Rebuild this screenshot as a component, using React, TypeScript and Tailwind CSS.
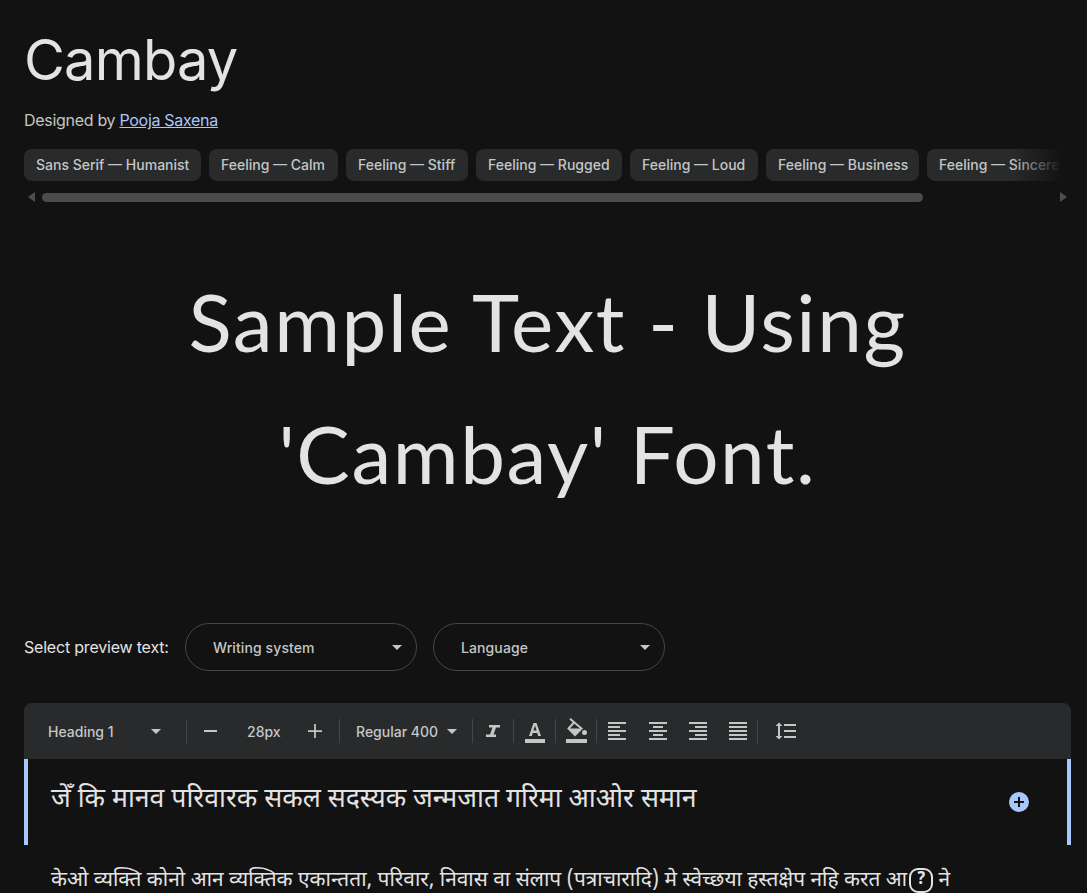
const sans = "font-['Inter','Noto_Sans',sans-serif]";

const chips: [string, number][] = [
  ["Sans Serif — Humanist", 177],
  ["Feeling — Calm", 129],
  ["Feeling — Stiff", 122],
  ["Feeling — Rugged", 146],
  ["Feeling — Loud", 128],
  ["Feeling — Business", 153],
  ["Feeling — Sincere", 144],
];

function Icon({ d, size = 24, className = "" }: { d: string; size?: number; className?: string }) {
  return (
    <svg width={size} height={size} viewBox="0 0 24 24" fill="currentColor" className={className}>
      <path d={d} />
    </svg>
  );
}

function Caret({ className = "" }: { className?: string }) {
  return <span className={`block w-0 h-0 border-x-[5px] border-x-transparent border-t-[5px] border-t-[#c4c7c5] ${className}`} />;
}

function Sep() {
  return <span className="block w-px h-6 bg-[#444746]" />;
}

export default function App() {
  return (
    <div className={`h-[893px] w-[1087px] overflow-hidden bg-[#121212] text-[#e3e3e3] ${sans}`}>
      <div className="pl-6 pr-4">
        <h1 className="pt-[24px] h-[108px] text-[56px] leading-[72px] font-normal tracking-[-0.8px] text-[#e3e3e3]">Cambay</h1>
        <p className="mt-[-1px] h-[26px] text-[16px] leading-[26px] text-[#c4c7c5] tracking-[-0.3px]">
          Designed by <a className="text-[#a8c7fa] underline">Pooja Saxena</a>
        </p>
        <div className="relative mt-[16px] w-[1047px] overflow-hidden">
          <div className="flex gap-2 w-[1200px]">
            {chips.map(([label, w]) => (
              <span
                key={label}
                style={{ width: w }}
                className="h-8 shrink-0 rounded-lg bg-[#282a2c] pl-3 text-[14px] leading-8 font-medium text-[#c4c7c5] whitespace-nowrap"
              >
                {label}
              </span>
            ))}
          </div>
          <div className="absolute right-0 top-0 h-8 w-[60px] bg-gradient-to-r from-transparent to-[#121212] to-85%" />
        </div>
        <div className="mt-[10px] flex h-[12px] items-center">
          <span className="block w-0 h-0 border-y-[5px] border-y-transparent border-r-[7px] border-r-[#4f4f4f] ml-[4px]" />
          <span className="block ml-[7px] h-[9px] w-[881px] rounded-full bg-[#4a4b4b]" />
          <span className="block w-0 h-0 border-y-[5px] border-y-transparent border-l-[7px] border-l-[#4f4f4f] ml-auto mr-[4px]" />
        </div>

        <div className="mt-[52px] h-[264px] w-full text-center text-[80px] leading-[132px] tracking-[1.6px] text-[#e3e3e3] font-['Lato',sans-serif]">
          <div>Sample Text - Using</div>
          <div>'Cambay' Font.</div>
        </div>

        <div className="mt-[104px] flex h-[48px] items-center">
          <span className="text-[16px] tracking-[-0.2px] text-[#e3e3e3] w-[161px] whitespace-nowrap mt-[-1px]">Select preview text:</span>
          <div className="flex h-12 w-[232px] items-center justify-between rounded-3xl border border-[#444746] pl-[27px] pr-[14px]">
            <span className="text-[14px] font-medium text-[#c4c7c5] tracking-[0.1px]">Writing system</span>
            <Caret />
          </div>
          <div className="ml-4 flex h-12 w-[232px] items-center justify-between rounded-3xl border border-[#444746] pl-[27px] pr-[14px]">
            <span className="text-[14px] font-medium text-[#c4c7c5] tracking-[0.1px]">Language</span>
            <Caret />
          </div>
        </div>

        <div className="mt-8 flex h-14 items-center rounded-t-lg bg-[#282a2c] text-[#c4c7c5]">
          <span className="ml-6 w-[103px] text-[14px] font-medium">Heading 1</span>
          <Caret />
          <span className="ml-[25px]"><Sep /></span>
          <span className="ml-[17px] block h-[2px] w-[13px] bg-[#c4c7c5]" />
          <span className="ml-[30px] w-[61px] text-[14px] font-medium">28px</span>
          <Icon size={14} d="M10.500 0h3v10.500H24v3H13.500V24h-3V13.500H0v-3h10.500z" className="mr-[17px]" />
          <Sep />
          <span className="ml-4 text-[14px] font-medium w-[91px] whitespace-nowrap">Regular 400</span>
          <Caret />
          <span className="ml-[15px]"><Sep /></span>
          <svg width="14" height="12" viewBox="0 0 14 12" fill="currentColor" className="ml-[13px]">
            <path d="M3 0h11v2.500h-4L7.500 9.500H10V12H0V9.500h4L6.500 2.500H3z" />
          </svg>
          <span className="ml-[13px]"><Sep /></span>
          <svg width="22" height="24" viewBox="0 0 22 24" fill="currentColor" className="ml-[10px]">
            <path fillRule="evenodd" d="M9.500 4h3L17 17h-2.800l-.9-3H8.700l-.9 3H5zM9.400 11.500h3.200L11 6.500z" />
            <rect x="1" y="20" width="20" height="4" />
          </svg>
          <span className="ml-[9px]"><Sep /></span>
          <svg width="22" height="26" viewBox="0 0 22 26" fill="currentColor" className="ml-[10px]">
            <path d="M4 .8 15.500 10.500 9 17 2.500 10.500 8 4.500" fill="none" stroke="currentColor" strokeWidth="2" />
            <path d="M2.500 10.500h13L9 17z" />
            <circle cx="18.500" cy="14.500" r="2.500" />
            <rect x="0" y="21" width="21" height="4" />
          </svg>
          <span className="ml-[8px]"><Sep /></span>
          <Icon size={24} d="M15 15H3v2h12v-2zm0-8H3v2h12V7zM3 13h18v-2H3v2zm0 8h18v-2H3v2zM3 3v2h18V3H3z" className="ml-[8px]" />
          <Icon size={24} d="M7 15v2h10v-2H7zm-4 6h18v-2H3v2zm0-8h18v-2H3v2zm4-6v2h10V7H7zM3 3v2h18V3H3z" className="ml-[17px]" />
          <Icon size={24} d="M3 21h18v-2H3v2zm6-4h12v-2H9v2zm-6-4h18v-2H3v2zm6-4h12V7H9v2zM3 3v2h18V3H3z" className="ml-[16px]" />
          <Icon size={24} d="M3 21h18v-2H3v2zm0-4h18v-2H3v2zm0-4h18v-2H3v2zm0-4h18V7H3v2zm0-6v2h18V3H3z" className="ml-[16px]" />
          <span className="ml-[7px]"><Sep /></span>
          <Icon size={24} d="M6 7h2.500L5 3.500 1.500 7H4v10H1.500L5 20.500 8.500 17H6V7zm4-2v2h12V5H10zm0 14h12v-2H10v2zm0-6h12v-2H10v2z" className="ml-[16px]" />
        </div>

        <div className="flex h-[86px] items-start justify-between border-x-4 border-x-[#a8c7fa] pl-[23px] pr-[38px] pt-[19px]">
          <span className="mt-[3px] text-[26.65px] leading-[40px] text-[#e3e3e3] font-['Noto_Sans_Devanagari','Noto_Sans',sans-serif] whitespace-nowrap">
            जेँ कि मानव परिवारक सकल सदस्यक जन्मजात गरिमा आओर समान
          </span>
          <span className="mt-[14px] flex h-5 w-5 items-center justify-center rounded-full bg-[#a8c7fa] text-[#121212]">
            <Icon size={12} d="M10 2h4v8h8v4h-8v8h-4v-8H2v-4h8z" />
          </span>
        </div>

        <div className="relative mt-[21px] pl-[27px] text-[20.85px] leading-[30px] text-[#e3e3e3] font-['Noto_Sans_Devanagari','Noto_Sans',sans-serif] whitespace-nowrap">
          केओ व्यक्ति कोनो आन व्यक्तिक एकान्तता, परिवार, निवास वा संलाप (पत्राचारादि) मे स्वेच्छया हस्तक्षेप नहि करत आ
          <span className="ml-[2px] inline-flex h-[25px] w-[24px] items-center justify-center rounded-[9px] border-2 border-[#e3e3e3] text-[17px] leading-none font-bold align-middle">?</span> ने
        </div>
      </div>
    </div>
  );
}
